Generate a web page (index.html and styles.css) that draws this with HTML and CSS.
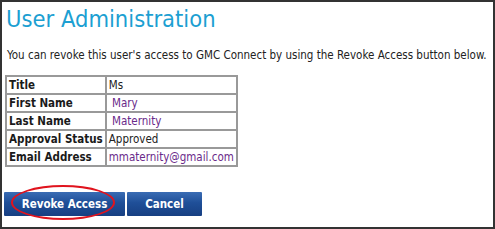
FILE: index.html
```html
<!DOCTYPE html>
<html>
<head>
<meta charset="utf-8">
<link rel="stylesheet" href="styles.css">
</head>
<body>
<div class="frame">
  <h1 class="title">User Administration</h1>
  <p class="intro">You can revoke this user's access to GMC Connect by using the Revoke Access button below.</p>
  <table class="details">
    <tr><th>Title</th><td>Ms</td></tr>
    <tr><th>First Name</th><td class="link">&nbsp;Mary</td></tr>
    <tr><th>Last Name</th><td class="link">&nbsp;Maternity</td></tr>
    <tr><th>Approval Status</th><td>Approved</td></tr>
    <tr><th>Email Address</th><td class="link">mmaternity@gmail.com</td></tr>
  </table>
  <div class="actions">
    <button class="btn btn-revoke">Revoke Access<span class="circle"></span></button>
    <button class="btn btn-cancel">Cancel</button>
  </div>
</div>
</body>
</html>
```
FILE: styles.css
```css
html, body { margin: 0; padding: 0; background: #fff; }
.frame {
  box-sizing: border-box;
  width: 495px;
  height: 229px;
  border: 2px solid #333;
  padding: 0 0 0 2px;
  font-family: "DejaVu Sans Condensed", "DejaVu Sans", sans-serif;
  color: #222;
  overflow: hidden;
}
.title {
  margin: 2px 0 0 2px;
  font-weight: normal;
  font-size: 23.5px;
  line-height: 30px;
  color: #1c9fd2;
}
.intro {
  margin: 15px 0 0 3px;
  font-size: 11.5px;
  line-height: 13px;
  color: #222;
}
.details {
  margin: 13px 0 0 1px;
  border-collapse: collapse;
  border: 2px solid #333;
  font-size: 11.5px;
}
.details th, .details td {
  border: 2px solid #999;
  height: 15px;
  padding: 1px 2px 0 2px;
  text-align: left;
  line-height: 15px;
  white-space: nowrap;
}
.details th { font-weight: bold; width: 93px; color: #1a1a1a; }
.details td { width: 125px; color: #222; }
.details td.link { color: #6a2a8a; }
.actions {
  display: flex;
  gap: 2px;
  margin-top: 25px;
}
.btn {
  position: relative;
  height: 24px;
  border: none;
  border-radius: 1px;
  background: linear-gradient(#3a6cb4, #1f4f98 45%, #173f82);
  color: #fff;
  font-family: "DejaVu Sans Condensed", "DejaVu Sans", sans-serif;
  font-weight: bold;
  font-size: 11.5px;
  padding: 0;
}
.btn-revoke { width: 121px; }
.btn-cancel { width: 75px; }
.circle {
  position: absolute;
  left: 7px;
  top: -7px;
  width: 100px;
  height: 31px;
  border: 2px solid #e0141e;
  border-radius: 50%;
}
```
